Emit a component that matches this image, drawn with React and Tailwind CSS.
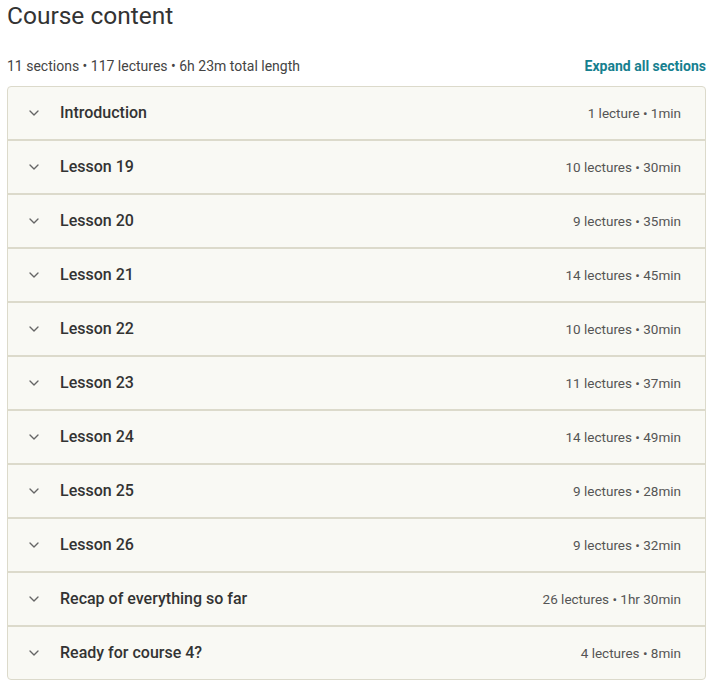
import { ChevronDown } from 'lucide-react'

const sections = [
  { title: 'Introduction', meta: '1 lecture • 1min' },
  { title: 'Lesson 19', meta: '10 lectures • 30min' },
  { title: 'Lesson 20', meta: '9 lectures • 35min' },
  { title: 'Lesson 21', meta: '14 lectures • 45min' },
  { title: 'Lesson 22', meta: '10 lectures • 30min' },
  { title: 'Lesson 23', meta: '11 lectures • 37min' },
  { title: 'Lesson 24', meta: '14 lectures • 49min' },
  { title: 'Lesson 25', meta: '9 lectures • 28min' },
  { title: 'Lesson 26', meta: '9 lectures • 32min' },
  { title: 'Recap of everything so far', meta: '26 lectures • 1hr 30min' },
  { title: 'Ready for course 4?', meta: '4 lectures • 8min' },
]

export default function App() {
  return (
    <div className="bg-white px-[7px] font-['Roboto',sans-serif] text-[#333]" style={{ width: 713 }}>
      <h2 className="pt-[1px] text-[24.5px] leading-[30px] text-[#333]">Course content</h2>
      <div className="mt-[25px] flex items-center justify-between">
        <span className="text-[14px] text-[#444]">11 sections • 117 lectures • 6h 23m total length</span>
        <button className="text-[14px] font-bold text-[#16808f]">Expand all sections</button>
      </div>
      <div className="mt-[9px] w-[699px] overflow-hidden rounded-[4px] border border-[#dcdacb] bg-[#f9f9f4]">
        {sections.map((s, i) => (
          <div
            key={s.title}
            className={`box-content flex h-[52px] items-center pl-[18px] pr-[24px] ${i > 0 ? 'border-t-2 border-[#dcdacb]' : ''}`}
          >
            <ChevronDown className="h-[16px] w-[16px] text-[#666]" strokeWidth={2} />
            <span className="ml-[18px] text-[16px] font-medium text-[#333]">{s.title}</span>
            <span className="ml-auto text-[13.5px] text-[#555]">{s.meta}</span>
          </div>
        ))}
      </div>
    </div>
  )
}
